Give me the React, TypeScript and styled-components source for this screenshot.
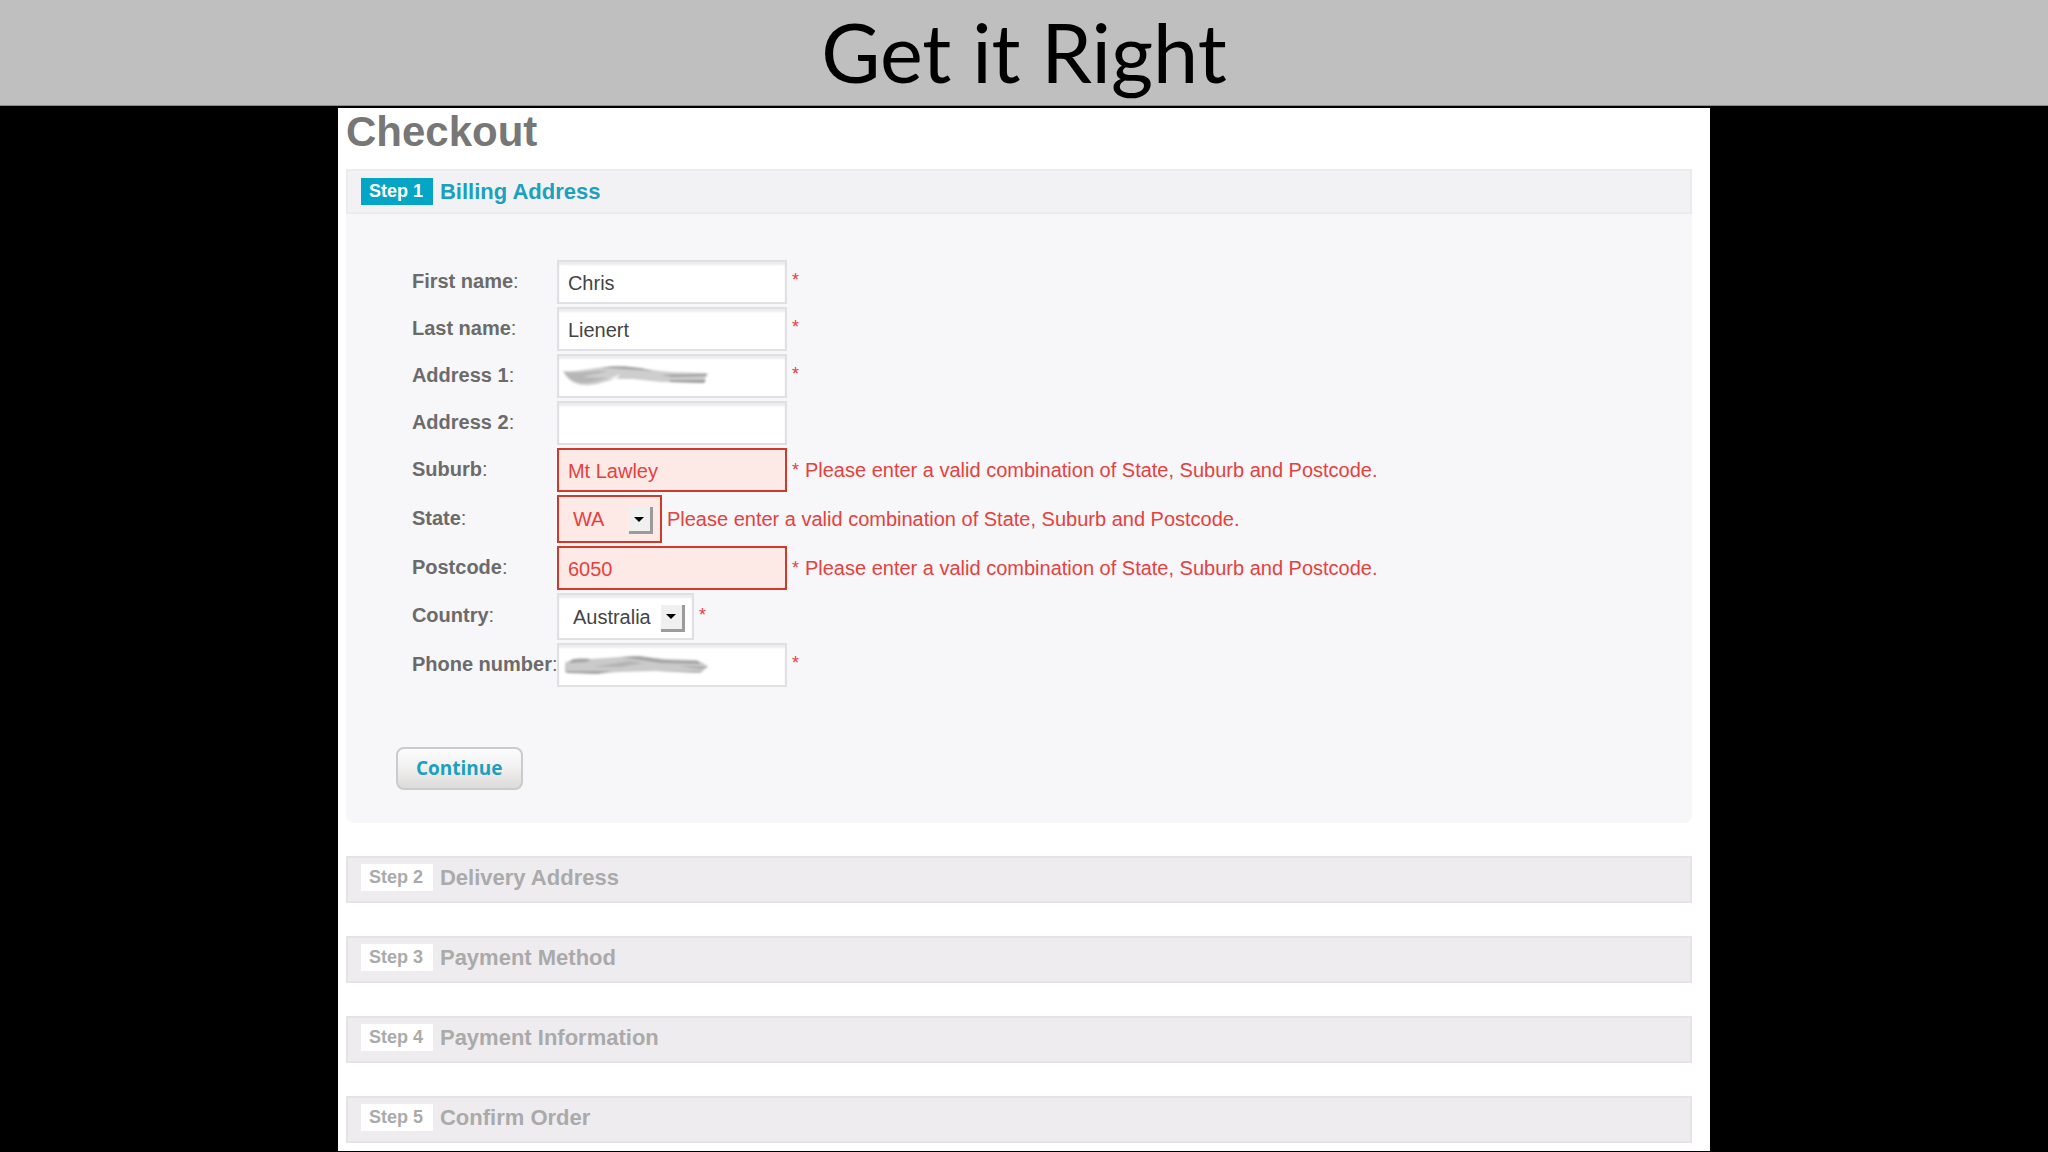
import React, { useState } from "react";
import styled, { createGlobalStyle, css } from "styled-components";

const GlobalStyle = createGlobalStyle`
  *, *::before, *::after { box-sizing: border-box; }
  body {
    margin: 0;
    min-height: 100vh;
    background: #000;
    font-family: "Liberation Sans", Arial, Helvetica, sans-serif;
    font-size: 20px;
    color: #444;
  }
`;

const Banner = styled.header`
  height: 106px;
  background: #bfbfbf;
  border-bottom: 1px solid #8c8c8c;
  color: #000;
  text-align: center;
  font-family: "Gill Sans", Lato, sans-serif;
  font-size: 81px;
  line-height: 104px;
`;

const Page = styled.main`
  width: 67%;
  margin: 2px auto 0;
  padding: 0 18px 8px 8px;
  background: #fff;
`;

const PageTitle = styled.h1`
  margin: 0;
  padding-bottom: 14px;
  color: #777;
  font-size: 42px;
  line-height: 47px;
`;

const Steps = styled.div`
  display: flex;
  flex-direction: column;
  gap: 33px;
`;

const StepBar = styled.h2<{ $open?: boolean }>`
  display: flex;
  align-items: center;
  gap: 7px;
  height: 47px;
  margin: 0;
  padding: 0 13px 4px;
  background: #eeecef;
  border: 2px solid #e5e3e6;
  color: #aaa;
  font-size: 22px;
  line-height: 26px;
  ${(p) =>
    p.$open &&
    css`
      height: 45px;
      padding: 0 13px;
      background: #f2f2f4;
      border-color: #ebebed;
      color: #1ba0bf;
    `}
`;

const StepBadge = styled.span<{ $open?: boolean }>`
  padding: 0 10px 0 8px;
  background: ${(p) => (p.$open ? "#05a5c6" : "#fff")};
  color: ${(p) => (p.$open ? "#fff" : "#aaa")};
  font-size: 18px;
  line-height: 27px;
`;

const StepBody = styled.form`
  padding: 46px 50px 33px;
  border-radius: 0 0 8px 8px;
  background: #f7f6f8;
`;

const Fields = styled.div`
  display: grid;
  gap: 3px;
  padding-left: 16px;
`;

const Row = styled.div`
  display: grid;
  grid-template-columns: 145px auto 1fr;
  align-items: center;
`;

const Label = styled.label`
  padding-bottom: 3px;
  color: #6b6b6b;
  white-space: nowrap;
  line-height: 24px;
`;

const Overlay = styled.div`
  display: grid;
  align-items: center;
  > * { grid-area: 1 / 1; }
`;

const box = css<{ $invalid?: boolean }>`
  border: 2px solid #e0dfe3;
  border-radius: 0;
  background: #fff;
  color: #444;
  font: inherit;
  outline: none;
  box-shadow: inset 0 3px 2px #ececee;
  ${(p) =>
    p.$invalid &&
    css`
      border-color: #cf3a2a;
      background: #fdeae7;
      color: #e5413f;
      box-shadow: none;
    `}
`;

const TextBox = styled.input<{ $invalid?: boolean }>`
  ${box}
  width: 230px;
  height: 44px;
  padding: 2px 9px 0;
`;

const SelectBox = styled.select<{ $invalid?: boolean }>`
  ${box}
  appearance: none;
  height: ${(p) => (p.$invalid ? 48 : 47)}px;
  padding: 0 ${(p) => (p.$invalid ? 55 : 41)}px 0 14px;
`;

const ArrowButton = styled.span`
  display: grid;
  place-items: center;
  justify-self: end;
  width: 24px;
  height: 27px;
  margin: 3px 9px 0 0;
  border: solid;
  border-width: 0 3px 3px 0;
  border-color: transparent #9b9b9b #9b9b9b transparent;
  background: #f0f0f0;
  pointer-events: none;
`;

const Scribble = styled.svg`
  margin-left: 4px;
  pointer-events: none;
`;

const Note = styled.span`
  display: flex;
  gap: 6px;
  padding-left: 5px;
  color: #e5413f;
  line-height: 24px;
`;

const Star = styled.span<{ $alone?: boolean }>`
  padding-bottom: ${(p) => (p.$alone ? 4 : 0)}px;
  font-size: 18px;
`;

const ContinueButton = styled.button`
  display: block;
  height: 43px;
  margin: 60px 0 0;
  padding: 0 18px 1px;
  border: 2px solid #cbcacc;
  border-radius: 8px;
  background: linear-gradient(#fcfcfc, #f2f1f1 45%, #dcdbd8);
  color: #1ba0bf;
  font-family: "Open Sans", sans-serif;
  font-size: 19px;
  font-weight: 700;
`;

type Field = {
  id: string;
  label: string;
  value?: string;
  options?: string[];
  required?: boolean;
  invalid?: boolean;
  smudge?: number;
};

const ERROR = "Please enter a valid combination of State, Suburb and Postcode.";

const fields: Field[] = [
  { id: "first", label: "First name", value: "Chris", required: true },
  { id: "last", label: "Last name", value: "Lienert", required: true },
  { id: "address1", label: "Address 1", required: true, smudge: 1 },
  { id: "address2", label: "Address 2" },
  { id: "suburb", label: "Suburb", value: "Mt Lawley", required: true, invalid: true },
  { id: "state", label: "State", value: "WA", options: ["WA"], invalid: true },
  { id: "postcode", label: "Postcode", value: "6050", required: true, invalid: true },
  { id: "country", label: "Country", value: "Australia", options: ["Australia"], required: true },
  { id: "phone", label: "Phone number", required: true, smudge: 2 },
];

const laterSteps = ["Delivery Address", "Payment Method", "Payment Information", "Confirm Order"];

function Smudge({ kind }: { kind: number }) {
  const blur = `smudge-blur-${kind}`;
  return (
    <Scribble width="152" height="28" viewBox="0 0 152 28" aria-hidden="true">
      <defs>
        <filter id={blur} x="-5%" y="-20%" width="110%" height="140%">
          <feGaussianBlur stdDeviation="1.3" />
        </filter>
      </defs>
      {kind === 1 ? (
        <g filter={`url(#${blur})`}>
          <path d="M2 9C20 10 32 5 56 4C78 5 92 9 112 10L146 11L143 21L100 20L72 17L54 17C42 20 34 24 22 23C12 22 6 17 2 9Z" fill="#cecece" />
          <path d="M3 10C20 12 34 8 46 9C40 12 30 12 22 15L46 16C36 19 26 23 16 20C9 18 6 14 3 10Z" fill="#b6b6b6" />
          <path d="M40 6C56 3 78 5 92 9C76 8 60 6 40 6ZM100 13L147 12L145 14L112 15ZM108 18L145 18L143 21L110 20Z" fill="#9c9c9c" />
          <path d="M48 17L59 12L56 17Z" fill="#f1f1f1" />
        </g>
      ) : (
        <g filter={`url(#${blur})`}>
          <path d="M4 12C12 7 20 6 30 8L74 5L104 8L136 9L147 15L140 22L96 20L58 21L36 23L4 21Z" fill="#cacaca" />
          <path d="M12 8L30 8L26 11L8 12ZM60 6L78 5L104 9L136 10L140 13L100 12L72 8ZM118 15L148 16L140 18ZM4 20L50 20L36 23L6 22Z" fill="#a4a4a4" />
          <path d="M32 16L68 10L82 12L60 16ZM96 20L140 20L138 22Z" fill="#b4b4b4" />
        </g>
      )}
    </Scribble>
  );
}

function FieldRow({ field }: { field: Field }) {
  const [value, setValue] = useState(field.value ?? "");
  const { id, label, options, required, invalid, smudge } = field;
  return (
    <Row>
      <Label htmlFor={id}>
        <b>{label}</b>:
      </Label>
      <Overlay>
        {options ? (
          <>
            <SelectBox id={id} value={value} $invalid={invalid} onChange={(e) => setValue(e.target.value)}>
              {options.map((o) => (
                <option key={o}>{o}</option>
              ))}
            </SelectBox>
            <ArrowButton>
              <svg width="10" height="5" viewBox="0 0 10 5" aria-hidden="true">
                <path d="M0 0H10L5 5Z" fill="#000" />
              </svg>
            </ArrowButton>
          </>
        ) : (
          <TextBox id={id} value={value} $invalid={invalid} onChange={(e) => setValue(e.target.value)} />
        )}
        {smudge && <Smudge kind={smudge} />}
      </Overlay>
      <Note>
        {required && <Star $alone={!invalid}>*</Star>}
        {invalid && <span>{ERROR}</span>}
      </Note>
    </Row>
  );
}

export default function App() {
  return (
    <>
      <GlobalStyle />
      <Banner>Get it Right</Banner>
      <Page>
        <PageTitle>Checkout</PageTitle>
        <Steps>
          <section>
            <StepBar $open>
              <StepBadge $open>Step 1</StepBadge>
              Billing Address
            </StepBar>
            <StepBody onSubmit={(e) => e.preventDefault()}>
              <Fields>
                {fields.map((f) => (
                  <FieldRow key={f.id} field={f} />
                ))}
              </Fields>
              <ContinueButton type="submit">Continue</ContinueButton>
            </StepBody>
          </section>
          {laterSteps.map((name, i) => (
            <StepBar key={name}>
              <StepBadge>Step {i + 2}</StepBadge>
              {name}
            </StepBar>
          ))}
        </Steps>
      </Page>
    </>
  );
}
